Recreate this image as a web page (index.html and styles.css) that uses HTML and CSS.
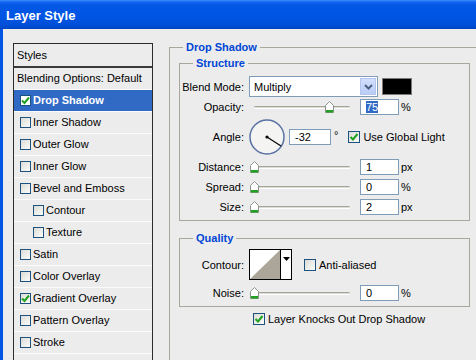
FILE: index.html
```html
<!DOCTYPE html>
<html lang="en">
<head>
    <meta charset="UTF-8">
    <title>Layer Style</title>
    <link rel="stylesheet" href="styles.css">
</head>
<body>
    <div class="window">
        <div class="titlebar">Layer Style</div>
        <div class="body">
            <div class="styles-list">
                <div class="list-head">Styles</div>
                <div class="item plain">Blending Options: Default</div>
                <div class="item selected"><span class="cb on"><svg width="9" height="9" viewBox="0 0 9 9"><path d="M1 4.5 L3.5 7 L8 1.5" fill="none" stroke="#21a121" stroke-width="2"/></svg></span>Drop Shadow</div>
                <div class="item"><span class="cb"></span>Inner Shadow</div>
                <div class="item"><span class="cb"></span>Outer Glow</div>
                <div class="item"><span class="cb"></span>Inner Glow</div>
                <div class="item"><span class="cb"></span>Bevel and Emboss</div>
                <div class="item sub"><span class="cb"></span>Contour</div>
                <div class="item sub"><span class="cb"></span>Texture</div>
                <div class="item"><span class="cb"></span>Satin</div>
                <div class="item"><span class="cb"></span>Color Overlay</div>
                <div class="item"><span class="cb"><svg width="9" height="9" viewBox="0 0 9 9"><path d="M1 4.5 L3.5 7 L8 1.5" fill="none" stroke="#21a121" stroke-width="2"/></svg></span>Gradient Overlay</div>
                <div class="item"><span class="cb"></span>Pattern Overlay</div>
                <div class="item"><span class="cb"></span>Stroke</div>
            </div>

            <fieldset class="group outer">
                <legend>Drop Shadow</legend>

                <fieldset class="group structure">
                    <legend>Structure</legend>
                    <div class="row blend">
                        <span class="lbl">Blend Mode:</span>
                        <div class="select">
                            <span class="select-text">Multiply</span>
                            <span class="drop"><svg width="9" height="6" viewBox="0 0 9 6"><path d="M1 1 L4.5 4.5 L8 1" fill="none" stroke="#4d6185" stroke-width="2"/></svg></span>
                        </div>
                        <span class="swatch"></span>
                    </div>
                    <div class="row">
                        <span class="lbl">Opacity:</span>
                        <div class="slider"><span class="track"></span><span class="thumb" style="left: 76px"><svg width="9" height="12" viewBox="0 0 9 12"><path d="M0.5 4.5 L4.5 0.5 L8.5 4.5 L8.5 11.5 L0.5 11.5 Z" fill="#fff" stroke="#8a948a"/><rect x="1" y="9" width="7" height="2.5" fill="#21a121"/></svg></span></div>
                        <div class="field"><span class="sel">75</span></div>
                        <span class="unit">%</span>
                    </div>
                    <div class="row angle">
                        <span class="lbl">Angle:</span>
                        <svg class="dial" width="36" height="36" viewBox="0 0 36 36">
                            <circle cx="18" cy="18" r="17" fill="#f4f4f2" stroke="#5a72a4" stroke-width="1.5"/>
                            <line x1="18" y1="18" x2="32" y2="27" stroke="#000" stroke-width="1.2"/>
                            <circle cx="18" cy="18" r="1.6" fill="#000"/>
                        </svg>
                        <div class="field wide">-32</div>
                        <span class="deg">°</span>
                        <span class="cb big"><svg width="10" height="10" viewBox="0 0 10 10"><path d="M1.5 5 L4 7.5 L8.5 2" fill="none" stroke="#21a121" stroke-width="2"/></svg></span>
                        <span class="cb-label">Use Global Light</span>
                    </div>
                    <div class="row">
                        <span class="lbl">Distance:</span>
                        <div class="slider"><span class="track"></span><span class="thumb" style="left: 1px"><svg width="9" height="12" viewBox="0 0 9 12"><path d="M0.5 4.5 L4.5 0.5 L8.5 4.5 L8.5 11.5 L0.5 11.5 Z" fill="#fff" stroke="#8a948a"/><rect x="1" y="9" width="7" height="2.5" fill="#21a121"/></svg></span></div>
                        <div class="field">1</div>
                        <span class="unit">px</span>
                    </div>
                    <div class="row">
                        <span class="lbl">Spread:</span>
                        <div class="slider"><span class="track"></span><span class="thumb" style="left: 1px"><svg width="9" height="12" viewBox="0 0 9 12"><path d="M0.5 4.5 L4.5 0.5 L8.5 4.5 L8.5 11.5 L0.5 11.5 Z" fill="#fff" stroke="#8a948a"/><rect x="1" y="9" width="7" height="2.5" fill="#21a121"/></svg></span></div>
                        <div class="field">0</div>
                        <span class="unit">%</span>
                    </div>
                    <div class="row">
                        <span class="lbl">Size:</span>
                        <div class="slider"><span class="track"></span><span class="thumb" style="left: 1px"><svg width="9" height="12" viewBox="0 0 9 12"><path d="M0.5 4.5 L4.5 0.5 L8.5 4.5 L8.5 11.5 L0.5 11.5 Z" fill="#fff" stroke="#8a948a"/><rect x="1" y="9" width="7" height="2.5" fill="#21a121"/></svg></span></div>
                        <div class="field">2</div>
                        <span class="unit">px</span>
                    </div>
                </fieldset>

                <fieldset class="group quality">
                    <legend>Quality</legend>
                    <div class="row contour-row">
                        <span class="lbl">Contour:</span>
                        <div class="contour">
                            <svg width="30" height="29" viewBox="0 0 30 29"><rect width="30" height="29" fill="#fff"/><path d="M0 29 L30 0 L30 29 Z" fill="#aba699"/></svg>
                            <span class="contour-drop"><svg width="7" height="4" viewBox="0 0 7 4"><path d="M0 0 L7 0 L3.5 4 Z" fill="#000"/></svg></span>
                        </div>
                        <span class="cb big aa"></span>
                        <span class="cb-label">Anti-aliased</span>
                    </div>
                    <div class="row noise">
                        <span class="lbl">Noise:</span>
                        <div class="slider"><span class="track"></span><span class="thumb" style="left: 1px"><svg width="9" height="12" viewBox="0 0 9 12"><path d="M0.5 4.5 L4.5 0.5 L8.5 4.5 L8.5 11.5 L0.5 11.5 Z" fill="#fff" stroke="#8a948a"/><rect x="1" y="9" width="7" height="2.5" fill="#21a121"/></svg></span></div>
                        <div class="field">0</div>
                        <span class="unit">%</span>
                    </div>
                </fieldset>

                <div class="row knock">
                    <span class="cb big"><svg width="10" height="10" viewBox="0 0 10 10"><path d="M1.5 5 L4 7.5 L8.5 2" fill="none" stroke="#21a121" stroke-width="2"/></svg></span>
                    <span class="cb-label">Layer Knocks Out Drop Shadow</span>
                </div>
            </fieldset>
        </div>
    </div>
</body>
</html>
```

FILE: styles.css
```css
* {
    box-sizing: border-box;
}

body {
    margin: 0;
    background-color: #ececec;
    color: #000;
    font: 11px "Liberation Sans", Arial, sans-serif;
    overflow: hidden;
}

.window {
    width: 476px;
    height: 360px;
    display: flex;
    flex-direction: column;
}

.titlebar {
    height: 29px;
    flex: none;
    padding: 2px 0 0 6px;
    color: #fff;
    font: bold 13px "Liberation Sans", Arial, sans-serif;
    line-height: 27px;
    background: linear-gradient(#3d8ffc 0, #1266ee 2px, #0458e6 5px, #0054e3 60%, #004ed6 90%, #0043bd 100%);
}

.body {
    flex: 1;
    display: flex;
    align-items: flex-start;
    gap: 16px;
    padding: 12px 0 0 10px;
    border-left: 3px solid #0055e5;
    overflow: hidden;
}

/* left list */
.styles-list {
    width: 140px;
    flex: none;
    margin-top: 2px;
    border: 1px solid #2c2c2c;
    border-bottom: none;
    height: 330px;
}

.list-head {
    height: 24px;
    padding-left: 3px;
    line-height: 22px;
    border-bottom: 2px solid #3a3a3a;
}

.item {
    height: 22px;
    display: flex;
    align-items: center;
    padding: 0 0 1px 6px;
    border-bottom: 1px solid #fbfbfb;
}

.item.plain {
    padding-left: 3px;
}

.item.sub {
    padding-left: 19px;
}

.item.selected {
    background-color: #316ac5;
    color: #fff;
    font-weight: bold;
}

.cb {
    width: 11px;
    height: 11px;
    flex: none;
    margin-right: 2px;
    display: flex;
    align-items: center;
    justify-content: center;
    border: 1px solid #1c5180;
    background: linear-gradient(135deg, #dcdcd6, #fbfbf9);
}

.cb.on {
    background: #fff;
}

.cb.big {
    width: 12px;
    height: 12px;
}

/* group boxes */
.group {
    margin: 0;
    padding: 0;
    min-width: 0;
    border: 1px solid #a7a79d;
}

.group legend {
    padding: 0 3px;
    line-height: 13px;
    color: #0046d5;
    font-weight: bold;
}

.outer {
    flex: 0 0 330px;
    width: 330px;
    min-width: 330px;
    height: 340px;
    padding-left: 9px;
}

.outer > legend {
    margin-left: 4px;
}

.structure,
.quality {
    width: 291px;
}

.structure legend,
.quality legend {
    margin-left: 13px;
}

.structure {
    margin-top: 3px;
    padding: 6px 0 5px 0;
}

.quality {
    margin-top: 11px;
    padding: 4px 0 5px 0;
}

.row {
    display: flex;
    align-items: center;
    height: 16px;
    margin-top: 4px;
}

.row.blend {
    height: 21px;
    margin-top: 0;
}

.row.blend + .row {
    margin-top: 2px;
}

.row.angle {
    height: 36px;
}

.lbl {
    width: 64px;
    flex: none;
    margin-right: 5px;
    text-align: right;
}

.select {
    width: 129px;
    height: 21px;
    display: flex;
    align-items: center;
    border: 1px solid #7f9db9;
    background-color: #fff;
    padding: 1px;
}

.select-text {
    flex: 1;
    padding-left: 3px;
}

.drop {
    width: 16px;
    height: 17px;
    display: flex;
    align-items: center;
    justify-content: center;
    background: linear-gradient(#d2defc, #b9cdf7);
    border: 1px solid #b4c6ee;
}

.swatch {
    width: 30px;
    height: 17px;
    margin-left: 4px;
    background-color: #000;
    border: 1px solid #7a7a7a;
}

.slider {
    position: relative;
    width: 101px;
    height: 16px;
    margin-right: 10px;
}

.track {
    position: absolute;
    left: 5px;
    right: 0;
    top: 7px;
    height: 3px;
    border-top: 1px solid #a4a49a;
    border-bottom: 1px solid #fff;
    border-radius: 2px;
    background-color: #dcdcd4;
}

.thumb {
    position: absolute;
    top: 2px;
    display: flex;
}

.field {
    width: 39px;
    height: 16px;
    padding-left: 5px;
    line-height: 14px;
    border: 1px solid #7f9db9;
    background-color: #fff;
}

.field.wide {
    width: 42px;
    margin-left: 4px;
}

.sel {
    background-color: #316ac5;
    color: #fff;
}

.unit {
    margin-left: 2px;
}

.deg {
    margin: -4px 0 0 3px;
}

.angle .cb {
    margin-left: 10px;
}

.cb-label {
    margin-left: 1px;
}

.dial {
    flex: none;
}

.contour-row {
    height: 31px;
    margin-top: 0;
}

.contour {
    width: 43px;
    height: 31px;
    display: flex;
    border: 1px solid #000;
    background-color: #fff;
}

.contour-drop {
    width: 11px;
    display: flex;
    justify-content: center;
    padding-top: 7px;
    border-left: 1px solid #000;
}

.aa {
    margin-left: 12px;
    margin-right: 2px;
}

.row.noise {
    margin-top: 5px;
}

.knock {
    height: 12px;
    margin-top: 6px;
    padding-left: 74px;
}
```
